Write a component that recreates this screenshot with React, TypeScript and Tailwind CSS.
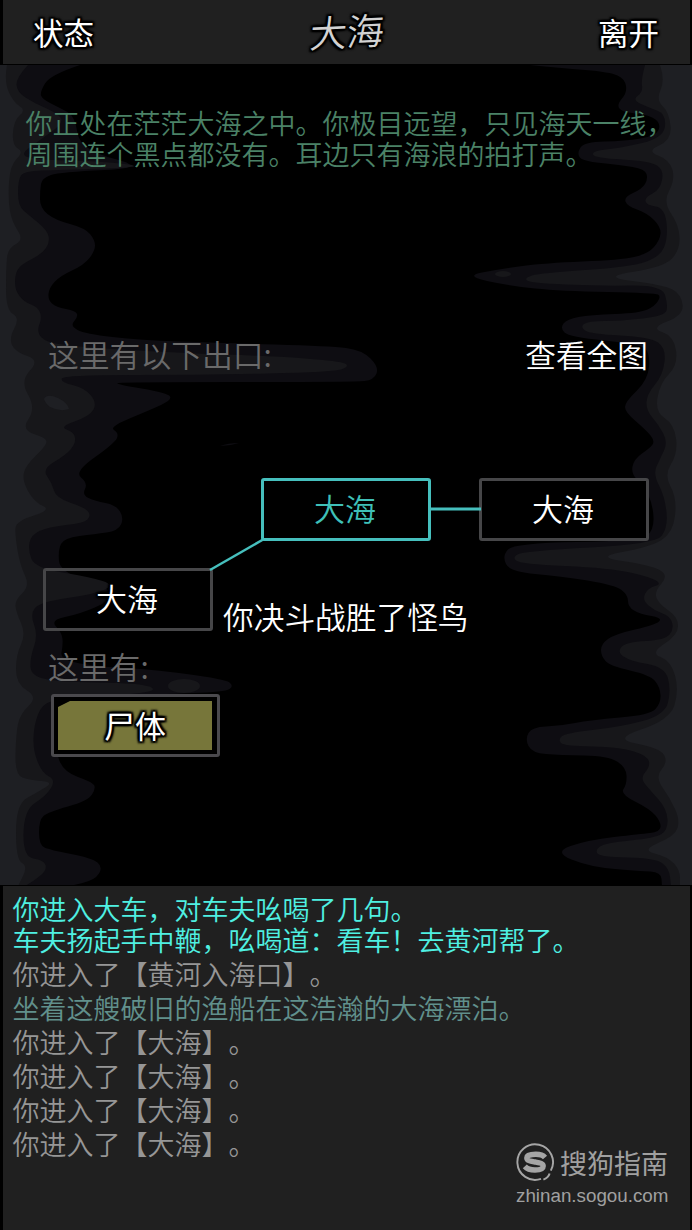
import React from "react";

type Point = [number, number];

const LEFT_OUTER =
  "80,65 50,75 40,92 42,99 60,108 75,116 80,150 150,168 60,172 42,178 40,190 40,208 55,220 85,228 95,240 95,251 84,265 60,276 49,288 48,300 56,307 76,311 78,317 70,326 85,334 140,340 220,343 330,346 362,350 379,367 374,380 355,382 120,382 115,384 168,393 172,400 150,410 109,427 119,433 115,443 74,472 88,483 82,495 95,501 116,505 124,518 118,531 95,534 64,538 58,550 60,572 110,588 112,600 80,614 50,620 62,633 63,645 60,660 100,667 148,669 225,679 234,686 225,692 160,694 60,700 55,720 55,750 64,772 92,782 96,788 88,801 48,812 39,820 39,845 50,850 92,858 103,867 95,880 70,886";
const LEFT_MID =
  "28,65 16,78 17,92 34,103 55,112 65,122 40,140 18,156 45,160 100,161 150,167 60,170 24,171 18,180 18,206 30,216 47,230 50,242 42,254 20,265 15,275 15,290 24,302 38,307 42,318 37,330 42,340 65,346 180,353 270,356 340,361 350,366 335,372 200,375 64,375 60,382 85,388 97,403 90,416 59,427 74,432 76,443 66,455 42,469 52,483 56,498 86,508 91,516 84,523 48,527 31,535 28,550 35,568 90,577 115,585 95,594 40,602 30,614 38,635 30,658 31,676 60,682 130,683 155,687 150,693 60,699 42,704 34,725 33,750 42,773 56,780 46,796 24,810 23,857 44,860 47,870 35,880 25,886";
const LEFT_INNER =
  "7,65 4,82 14,103 26,110 14,120 12,145 24,152 10,165 8,200 12,222 24,240 8,248 6,268 6,310 20,318 9,338 15,352 40,360 20,381 36,408 21,430 47,438 46,446 26,465 22,480 34,502 52,510 16,521 15,535 20,565 30,586 15,600 16,612 26,634 16,655 16,684 38,697 20,714 16,734 15,775 30,780 54,782 38,792 16,804 16,860 28,866 18,886";
const RIGHT_OUTER =
  "530,65 560,68 610,72 625,79 627,93 617,104 621,112 650,115 661,124 656,136 625,141 584,142 577,153 582,161 620,165 645,169 648,179 642,189 624,197 627,206 647,213 661,227 660,240 648,254 620,260 545,263 500,269 464,276 510,286 560,291 655,293 661,296 655,306 640,313 590,315 567,319 560,328 569,337 640,344 650,353 648,380 625,402 625,412 646,430 655,441 650,448 634,459 631,474 644,486 653,505 654,530 640,541 514,543 502,556 510,572 560,576 615,585 628,595 628,607 640,614 663,618 655,625 615,634 601,644 601,656 610,666 650,675 660,687 661,703 650,715 590,720 560,726 532,727 525,739 532,753 560,755 608,756 626,767 627,784 620,794 650,809 661,822 660,832 640,834 588,840 553,852 590,867 640,871 661,872 662,886";
const RIGHT_MID =
  "645,65 641,80 643,92 632,100 650,108 666,114 664,138 620,148 592,151 594,158 650,161 664,170 660,190 645,197 646,205 665,208 668,238 660,257 630,267 540,273 524,278 530,283 600,286 662,285 668,305 665,316 620,321 588,321 580,327 590,334 650,337 666,348 663,375 647,394 646,410 658,424 668,442 660,459 653,474 665,497 668,528 655,544 525,551 512,557 520,564 610,568 650,577 662,584 648,588 642,600 655,611 670,616 674,629 665,640 626,642 617,652 630,661 665,667 671,690 665,715 620,727 565,733 558,740 564,746 620,747 648,756 650,767 640,778 650,790 667,809 668,830 655,838 605,843 595,850 600,857 655,858 669,868 671,886";
const RIGHT_INNER =
  "660,65 665,80 656,100 669,112 672,140 646,151 670,160 675,180 663,202 679,225 680,250 664,267 600,277 664,285 681,294 684,315 650,328 674,336 678,365 660,383 655,412 674,424 678,453 664,475 677,498 673,533 650,547 594,557 650,565 669,575 654,592 659,604 678,617 678,635 650,653 671,661 679,690 670,720 612,739 660,748 668,762 655,777 670,798 680,820 675,836 641,850 668,857 680,870 680,886";

function coastPath(data: string, edge: number): string {
  const p = data.split(" ").map((s) => s.split(",").map(Number) as Point);
  let d = `M${edge},65 L${p[0][0]},${p[0][1]}`;
  for (let i = 1; i < p.length - 1; i++) {
    const mx = (p[i][0] + p[i + 1][0]) / 2;
    const my = (p[i][1] + p[i + 1][1]) / 2;
    d += ` Q${p[i][0]},${p[i][1]} ${mx},${my}`;
  }
  const end = p[p.length - 1];
  return `${d} L${end[0]},${end[1]} L${edge},886 Z`;
}

function InkBackdrop() {
  return (
    <svg className="absolute inset-0 h-full w-full" viewBox="0 65 692 820" aria-hidden="true">
      <path d={coastPath(LEFT_OUTER, 0)} fill="#0e0d12" />
      <path d={coastPath(LEFT_MID, 0)} fill="#17171a" />
      <path d={coastPath(LEFT_INNER, 0)} fill="#1e1f23" />
      <path d={coastPath(RIGHT_OUTER, 692)} fill="#0e0d12" />
      <path d={coastPath(RIGHT_MID, 692)} fill="#17171a" />
      <path d={coastPath(RIGHT_INNER, 692)} fill="#1e1f23" />
      <path d="M44,399 Q47,393 58,398 Q68,403 69,409 Q60,412 50,407 Q45,403 44,399Z" fill="#1e1f23" />
      <ellipse cx="184" cy="686" rx="16" ry="7" fill="#17171a" />
      <ellipse cx="503" cy="274" rx="8" ry="3" fill="#17171a" />
      <path d="M220,446 Q228,443 239,443 Q230,446 220,446Z" fill="#0e0d12" />
    </svg>
  );
}

const OUTLINE =
  "[text-shadow:2px_0_1px_#000,-2px_0_1px_#000,0_2px_1px_#000,0_-2px_1px_#000,2px_2px_2px_#000,-2px_-2px_2px_#000,2px_-2px_2px_#000,-2px_2px_2px_#000]";

const NODE =
  "absolute flex h-[63px] w-[170px] items-center justify-center rounded-[3px] border-[3px] pr-[2px] pb-[4px] text-[31px] leading-none";

const LOG = [
  { text: "你进入大车，对车夫吆喝了几句。\n车夫扬起手中鞭，吆喝道：看车！去黄河帮了。", tone: "text-[#4ff0e2]" },
  { text: "你进入了【黄河入海口】。", tone: "text-[#969696]" },
  { text: "坐着这艘破旧的渔船在这浩瀚的大海漂泊。", tone: "text-[#61908c]" },
  { text: "你进入了【大海】。", tone: "text-[#969696]" },
  { text: "你进入了【大海】。", tone: "text-[#969696]" },
  { text: "你进入了【大海】。", tone: "text-[#969696]" },
  { text: "你进入了【大海】。", tone: "text-[#969696]" },
];

function SogouMark() {
  return (
    <svg className="h-[38px] w-[38px]" viewBox="0 0 38 38" fill="none" aria-hidden="true">
      <path d="M25 35.9A17.8 17.8 0 1 1 34.8 27.6" stroke="#a5a5a5" strokeWidth="1.9" />
      <path d="M27.4 36.6Q32.4 34.6 33.6 30.4" stroke="#a5a5a5" strokeWidth="2" />
      <path
        d="M29 14.4C26.8 11.8 23.6 11.2 19.8 11.2C14.6 11.2 10.8 12.4 10.8 14.9C10.8 17.6 14.6 18.1 19.2 19C24 19.9 27.2 20.4 27.2 23C27.2 25.8 23.8 27 19 27C14.4 27 11 25.9 8.8 23.4"
        stroke="#a5a5a5"
        strokeWidth="5.4"
      />
    </svg>
  );
}

export default function App() {
  return (
    <div
      lang="zh-CN"
      className="flex h-[1230px] w-[692px] flex-col overflow-hidden bg-black font-['Noto_Sans_CJK_SC',sans-serif] font-[350] [text-spacing-trim:space-all]"
    >
      <header className="mr-[2px] ml-[3px] flex h-[64px] shrink-0 items-center justify-between bg-[#202020] pr-[31px] pl-[30px] text-[30.5px] leading-none text-white">
        <button className={`w-[64px] text-left font-normal ${OUTLINE}`}>状态</button>
        <h1 className={`-skew-x-4 -skew-y-3 pb-[4px] pl-[2px] text-[37px] text-[#d2d2d2] ${OUTLINE}`}>大海</h1>
        <button className={`w-[64px] text-right font-normal ${OUTLINE}`}>离开</button>
      </header>

      <main className="relative mt-px h-[820px] shrink-0">
        <InkBackdrop />
        <div className="relative flex h-full flex-col">
          <p className="mt-[42px] ml-[25.5px] h-[62px] text-[27px] leading-[31px] whitespace-nowrap text-[#4b8267]">
            你正处在茫茫大海之中。你极目远望，只见海天一线，
            <br />
            周围连个黑点都没有。耳边只有海浪的拍打声。
          </p>

          <div className="mt-[163px] flex h-[44px] items-center justify-between pr-[44px] pl-[48px] text-[30.8px] leading-[44px]">
            <span className="text-[#6a6a6a]">这里有以下出口:</span>
            <button className="-mt-px text-[30.7px] text-white">查看全图</button>
          </div>

          <div className="relative mt-[102px] h-[162px]">
            <div className={`${NODE} top-0 left-[261px] border-[#46bfbd] bg-black text-[#3fc0b8]`}>大海</div>
            <div className={`${NODE} top-0 left-[479px] border-[#464648] bg-black text-white`}>大海</div>
            <div className={`${NODE} top-[90px] left-[43px] border-[#464648] text-white ${OUTLINE}`}>大海</div>
            <svg className="absolute inset-0 h-full w-full" viewBox="0 0 692 162" fill="none" aria-hidden="true">
              <path d="M210 92L264 61" stroke="#46bfbd" strokeWidth="2.5" />
              <path d="M429 31H481" stroke="#46bfbd" strokeWidth="3" />
            </svg>
            <p className="absolute top-[116px] left-[223px] text-[30.7px] leading-[44px] whitespace-nowrap text-white">
              你决斗战胜了怪鸟
            </p>
          </div>

          <p className="mt-[4px] ml-[48px] h-[44px] text-[30.8px] leading-[44px] text-[#6a6a6a]">这里有:</p>
          <button className="mt-[6px] ml-[51px] h-[63px] w-[169px] rounded-[3px] border-[3px] border-[#4a494d] bg-black p-[4px]">
            <span
              className={`flex h-[49px] w-[154px] items-center justify-center bg-[#77763a] pb-[3px] text-[31px] leading-none font-normal text-white [clip-path:polygon(0_6px,12px_0,100%_0,100%_100%,0_100%)] ${OUTLINE}`}
            >
              尸体
            </span>
          </button>
        </div>
      </main>

      <section className="relative mt-px mr-[2px] ml-[3px] min-h-0 flex-1 bg-[#202020]">
        <div className="flex flex-col gap-[3px] pt-[7px] pl-[9.5px] text-[27px] leading-[31px]">
          {LOG.map((entry, i) => (
            <p key={i} className={`whitespace-pre ${entry.tone}`}>
              {entry.text}
            </p>
          ))}
        </div>
        <div className="absolute right-[20px] bottom-[22px] flex w-[154px] flex-col text-[#a0a0a0]">
          <div className="flex h-[38px] items-center gap-[6px]">
            <SogouMark />
            <span className="text-[27px] leading-none font-normal whitespace-nowrap">搜狗指南</span>
          </div>
          <span className="mt-[3px] font-['Liberation_Sans',sans-serif] text-[18.8px] leading-[24px] font-normal whitespace-nowrap">
            zhinan.sogou.com
          </span>
        </div>
      </section>
    </div>
  );
}
